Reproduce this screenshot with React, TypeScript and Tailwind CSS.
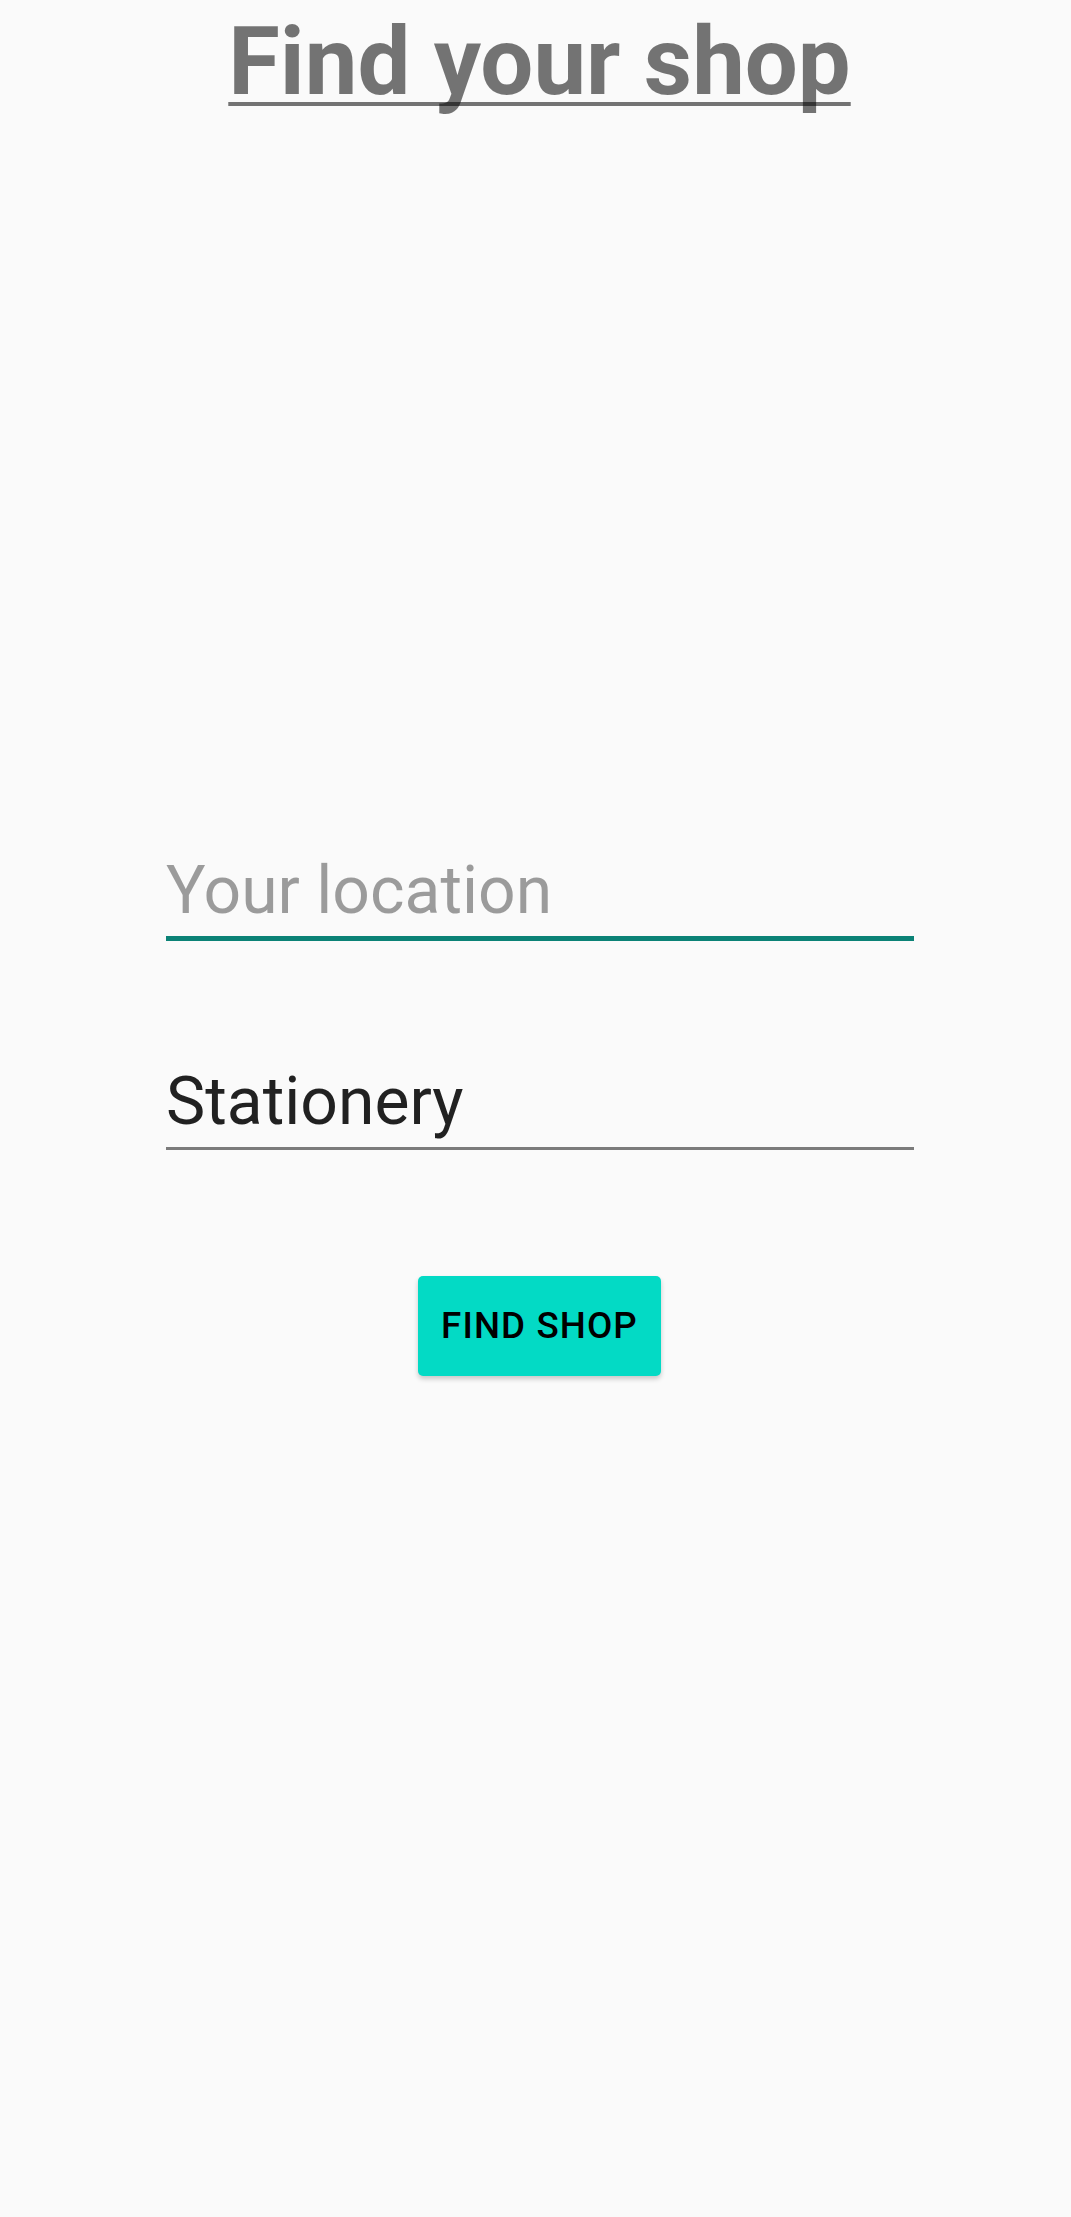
import React from 'react';

const App: React.FC = () => {
    return (
        <div className="min-h-[2217px] w-full bg-[#fafafa] font-['Roboto',sans-serif] flex flex-col">
            <h1 className="mt-[7px] pl-[8px] text-center text-[94px] leading-[110px] font-bold text-[rgba(0,0,0,0.54)] underline decoration-[4px] underline-offset-[8px] [text-decoration-skip-ink:none]">
                Find your shop
            </h1>

            <div className="mt-[735px] ml-[166px] w-[748px] flex flex-col">
                <input
                    type="text"
                    placeholder="Your location"
                    className="h-[89px] pb-[7px] border-b-[5px] border-[#0b8276] bg-transparent text-[66px] leading-[77px] text-[rgba(0,0,0,0.87)] placeholder:text-[rgba(0,0,0,0.38)] outline-none"
                />
                <input
                    type="text"
                    defaultValue="Stationery"
                    className="mt-[122px] h-[87px] pb-[7px] border-b-[3px] border-[#7b7b7b] bg-transparent text-[66px] leading-[77px] text-[rgba(0,0,0,0.87)] outline-none"
                />
            </div>

            <div className="mt-[126px] pl-[8px] flex justify-center">
                <button className="w-[243px] h-[100px] rounded-[5px] bg-[#03dac5] text-black text-[36.75px] font-medium tracking-[0.03em] shadow-[0_3px_5px_rgba(0,0,0,0.2)]">
                    FIND SHOP
                </button>
            </div>
        </div>
    );
};

export default App;
